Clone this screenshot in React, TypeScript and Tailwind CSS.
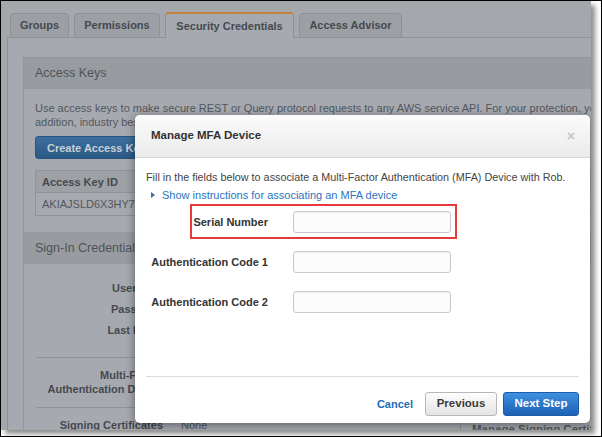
import React from "react";

function Tab({ w, active, children }: { w: string; active?: boolean; children: React.ReactNode }) {
  if (active) {
    return (
      <div className={`${w} h-[26px] rounded-t-[4px] border-x border-t-2 border-x-[#8e9297] border-t-[#c4823a] bg-[#a6aab0] flex items-center justify-center font-bold text-[11px] text-[#45494e]`}>
        {children}
      </div>
    );
  }
  return (
    <div className={`${w} h-[25px] rounded-t-[4px] border border-[#8e9297] bg-[#9ca0a5] flex items-center justify-center font-bold text-[11px] text-[#45494e]`}>
      {children}
    </div>
  );
}

function FormRow({ label, first }: { label: string; first?: boolean }) {
  return (
    <div className={`flex items-center h-[22px] ${first ? "mt-[9px]" : "mt-[18px]"}`}>
      <div className="w-[122px] text-right font-bold text-[11px] text-[#333]">{label}</div>
      <div className="ml-[25px] w-[158px] h-[22px] rounded-[3px] border border-[#c9c9c9] bg-[#fcfcfc] shadow-[inset_0_1px_1px_rgba(0,0,0,0.05)]" />
    </div>
  );
}

export default function App() {
  return (
    <div className="w-[602px] h-[437px] border border-black bg-white overflow-hidden font-['Liberation_Sans',Arial,sans-serif]">
      <div className="relative w-[590px] h-[429px] bg-[#a4a8ad] overflow-hidden shadow-[4px_4px_5px_rgba(0,0,0,0.45)] flex flex-col">
        {/* Tabs */}
        <div className="relative z-10 -mb-px flex items-end gap-[5px] pl-[9px] pt-[11px]">
          <Tab w="w-[59px]">Groups</Tab>
          <Tab w="w-[86px]">Permissions</Tab>
          <Tab w="w-[129px]" active>Security Credentials</Tab>
          <Tab w="w-[103px]">Access Advisor</Tab>
        </div>

        {/* Panel */}
        <div className="ml-[6px] flex-1 border-t border-l border-[#8e9297] bg-[#a6aab0] pt-[19px] pl-[15px]">
          <div className="border-l border-t border-[#92969b] w-[700px]">
            {/* Access Keys */}
            <div className="h-[31px] bg-[#989ca1] flex items-center pl-[11px] text-[12.5px] text-[#4f5358]">Access Keys</div>
            <div className="px-[11px] pt-[12px] pb-[16px] text-[11px] leading-[14px] text-[#53575c]">
              <div className="whitespace-nowrap">Use access keys to make secure REST or Query protocol requests to any AWS service API. For your protection, you should never share your secret keys with anyone. In</div>
              <div className="whitespace-nowrap">addition, industry best practices recommend frequent key rotation.</div>
              <div className="mt-[7px] inline-flex h-[23px] items-center rounded-[3px] border border-[#2a5580] bg-linear-to-b from-[#3d6f9f] to-[#2c5985] px-[11px] font-bold text-[11px] text-[#c9d0d7]">
                Create Access Key
              </div>
              <div className="mt-[11px] w-[600px] border border-[#8f9398]">
                <div className="flex h-[22px] items-center bg-[#9da1a6] border-b border-[#8f9398] font-bold text-[#45494e]">
                  <div className="pl-[6px]">Access Key ID</div>
                </div>
                <div className="flex h-[22px] items-center text-[#53575c]">
                  <div className="pl-[6px]">AKIAJSLD6X3HY7EXAMPL</div>
                </div>
              </div>
            </div>

            {/* Sign-In Credentials */}
            <div className="h-[32px] bg-[#989ca1] flex items-center pl-[11px] text-[12.5px] text-[#4f5358]">Sign-In Credentials</div>
            <div className="pt-[14px] text-[11px] text-[#53575c]">
              <div className="flex h-[21px] items-center">
                <div className="w-[139px] text-right font-bold text-[#45494e]">User ARN</div>
              </div>
              <div className="flex h-[21px] items-center">
                <div className="w-[139px] text-right font-bold text-[#45494e]">Password</div>
              </div>
              <div className="flex h-[21px] items-center">
                <div className="w-[139px] text-right font-bold text-[#45494e]">Last Login</div>
              </div>
              <div className="ml-[12px] mt-[16px] border-t border-[#8f9398]" />
              <div className="mt-[10px] flex items-center leading-[14px]">
                <div className="w-[139px] text-right font-bold text-[#45494e]">Multi-Factor<br />Authentication Device</div>
                <div className="ml-[18px] w-[279px]" />
                <div className="h-[25px] w-[140px] rounded-[3px] border border-[#8f9398]" />
              </div>
              <div className="ml-[12px] mt-[11px] border-t border-[#8f9398]" />
              <div className="mt-[10px] flex items-start leading-[14px]">
                <div className="w-[139px] text-right font-bold text-[#45494e]">Signing Certificates</div>
                <div className="ml-[18px] w-[279px]">None</div>
                <div className="h-[25px] rounded-[3px] border border-[#8f9398] px-[11px] pt-[3px] font-bold text-[#55595e] text-[11.5px] whitespace-nowrap">Manage Signing Certificates</div>
              </div>
            </div>
          </div>
        </div>

        {/* Modal */}
        <div className="absolute left-[134px] top-[114px] w-[455px] rounded-[5px] bg-white shadow-[0_2px_10px_rgba(0,0,0,0.45)]">
          <div className="h-[43px] rounded-t-[5px] bg-linear-to-b from-[#fbfbfb] to-[#ebebeb] border-b border-[#d6d6d6] flex items-center justify-between pl-[16px] pr-[15px]">
            <div className="font-bold text-[11.5px] text-[#333]">Manage MFA Device</div>
            <div className="font-bold text-[14px] leading-none text-[#c6c6c6]">×</div>
          </div>
          <div className="px-[11px]">
            <div className="mt-[12px] text-[10.8px] leading-[14px] text-[#444] whitespace-nowrap">
              Fill in the fields below to associate a Multi-Factor Authentication (MFA) Device with Rob.
            </div>
            <div className="mt-[4px] flex items-center text-[11px] leading-[14px] text-[#2a75c0]">
              <svg width="4" height="6" viewBox="0 0 4 6" className="ml-[5px]">
                <path d="M0 0 L4 3 L0 6 Z" fill="#3b6fa8" />
              </svg>
              <span className="ml-[7px]">Show instructions for associating an MFA device</span>
            </div>
            <FormRow label="Serial Number" first />
            <FormRow label="Authentication Code 1" />
            <FormRow label="Authentication Code 2" />
            <div className="mt-[63px] border-t border-[#dcdcdc]" />
          </div>
          <div className="flex items-center justify-end pt-[15px] pb-[7px] pr-[11px]">
            <div className="font-bold text-[11px] text-[#1f6bb6]">Cancel</div>
            <div className="ml-[12px] w-[72px] h-[24px] rounded-[3px] border border-[#b8b8b8] bg-linear-to-b from-[#fdfdfd] to-[#e4e4e4] flex items-center justify-center font-bold text-[11.5px] text-[#3a3a3a]">
              Previous
            </div>
            <div className="ml-[6px] w-[76px] h-[24px] rounded-[3px] border border-[#1a5ca8] bg-linear-to-b from-[#3f90e0] to-[#1c62b6] flex items-center justify-center font-bold text-[11.5px] text-white">
              Next Step
            </div>
          </div>
          {/* annotation box */}
          <div className="absolute left-[55px] top-[89px] w-[267px] h-[35px] border-2 border-[#e5393c]" />
        </div>
      </div>
    </div>
  );
}
